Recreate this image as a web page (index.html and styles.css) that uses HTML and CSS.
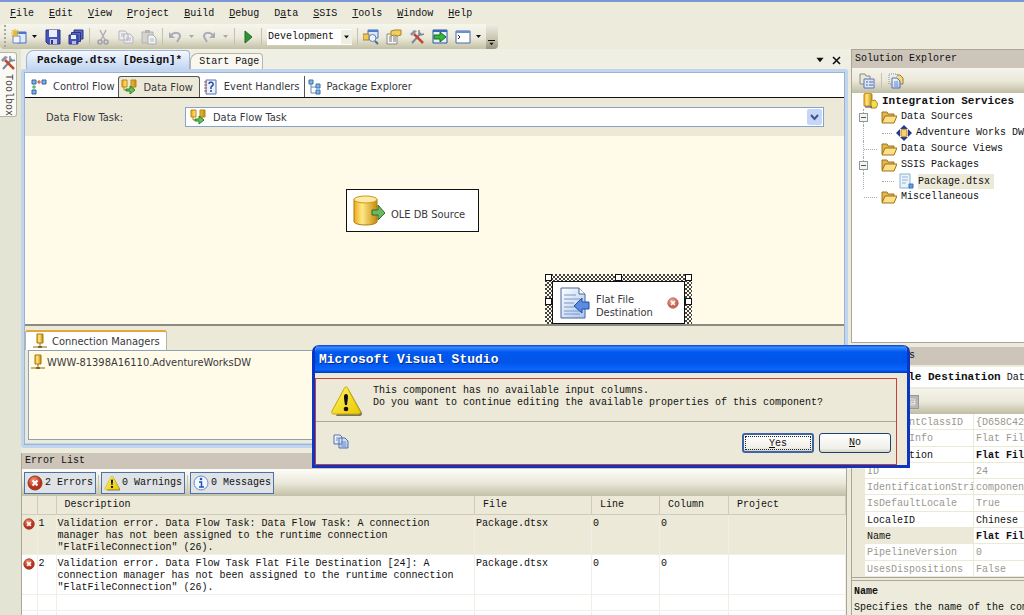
FILE: index.html
```html
<!DOCTYPE html>
<html lang="en">
<head>
<meta charset="utf-8">
<title>Package.dtsx - Microsoft Visual Studio</title>
<link rel="stylesheet" href="styles.css">
</head>
<body>
<svg class="defs" aria-hidden="true">
  <defs>
    <linearGradient id="gold" x1="0" x2="1"><stop offset="0" stop-color="#f0a818"/><stop offset=".35" stop-color="#ffe98a"/><stop offset="1" stop-color="#c88a08"/></linearGradient>
    <linearGradient id="warn" x1="0" x2="1" y2="1"><stop offset="0" stop-color="#fff36a"/><stop offset="1" stop-color="#eac800"/></linearGradient>
    <radialGradient id="red" cx=".4" cy=".3"><stop offset="0" stop-color="#f09a78"/><stop offset="1" stop-color="#b8301c"/></radialGradient>
    <linearGradient id="page" x1="0" x2="1" y1="0" y2="1"><stop offset="0" stop-color="#fff"/><stop offset="1" stop-color="#a9c6ee"/></linearGradient>
  </defs>
  <symbol id="i-new" viewBox="0 0 16 16"><path d="M6 3h9v11H6z" fill="#dfeafa" stroke="#4a6eb4"/><path d="M6 3h9v2H6z" fill="#4a76c8"/><path d="M2 7h7v7H2z" fill="#eef4ff" stroke="#6a86b8"/><path d="M4 0v8M0 4h8M1 1l6 6M7 1L1 7" stroke="#e8b830" stroke-width="1.2"/></symbol>
  <symbol id="i-save" viewBox="0 0 16 16"><path d="M1 1h14v14H3l-2-2z" fill="#4654b4" stroke="#2c3488"/><path d="M4 1h8v7H4z" fill="#e8eefc"/><path d="M5 10h7v5H5z" fill="#c4cce8"/><path d="M6 11h2v4H6z" fill="#2c3488"/></symbol>
  <symbol id="i-saveall" viewBox="0 0 16 16"><path d="M6 1h9v9H6z" fill="#5a68c0" stroke="#2c3488"/><path d="M3.500 3.500h9v9h-9z" fill="#5a68c0" stroke="#2c3488"/><path d="M1 6h9v9H1z" fill="#4654b4" stroke="#2c3488"/><path d="M3 6h5v4H3z" fill="#e8eefc"/><path d="M4 12h4v3H4z" fill="#b4bce4"/></symbol>
  <symbol id="i-cut" viewBox="0 0 16 16"><path d="M5 1l5 10M11 1L6 11" stroke="#b0b0b8" stroke-width="1.500"/><circle cx="5" cy="13" r="2" fill="none" stroke="#a0a0ac" stroke-width="1.500"/><circle cx="11" cy="13" r="2" fill="none" stroke="#a0a0ac" stroke-width="1.500"/></symbol>
  <symbol id="i-copy" viewBox="0 0 16 16"><path d="M1 2h6l3 3v6H1zM6 5h6l3 3v6H6z" fill="#eeeef2" stroke="#b4b4be"/><path d="M3 5h3M3 7h3M8 9h5M8 11h5" stroke="#b4b4be"/></symbol>
  <symbol id="i-paste" viewBox="0 0 16 16"><path d="M1 3h11v11H1z" fill="#d4d4cc" stroke="#b0b0b0"/><path d="M4 1h5v3H4z" fill="#b4b4b8"/><path d="M7 6h5l3 3v6H7z" fill="#f4f4f8" stroke="#aaaab4"/><path d="M9 10h4M9 12h4" stroke="#b4b4be"/></symbol>
  <symbol id="i-undo" viewBox="0 0 16 16"><path d="M3 6c4-4 9-2 9 1 0 2-2 4-3 6" fill="none" stroke="#a8aab8" stroke-width="2"/><path d="M1 3v6h6z" fill="#a8aab8"/></symbol>
  <symbol id="i-redo" viewBox="0 0 16 16"><path d="M11 6C7 2 2 4 2 7c0 2 2 4 3 6" fill="none" stroke="#a8aab8" stroke-width="2"/><path d="M13 3v6H7z" fill="#a8aab8"/></symbol>
  <symbol id="i-play" viewBox="0 0 16 16"><path d="M5 2l7 6-7 6z" fill="#2f9434" stroke="#1d6c22"/></symbol>
  <symbol id="i-find" viewBox="0 0 16 16"><path d="M5 1h10v8H5z" fill="#dce8fa" stroke="#4470b8"/><path d="M5 1h10v2H5z" fill="#4e7ece"/><path d="M0 5h6v6H0z" fill="#f0c858" stroke="#a88420"/><circle cx="9.500" cy="9" r="3.500" fill="#e6f2ff" stroke="#6080a8"/><path d="M12 12l3 3" stroke="#58688c" stroke-width="2"/></symbol>
  <symbol id="i-props" viewBox="0 0 16 16"><path d="M1 5h10v10H1z" fill="#f8f8f4" stroke="#888"/><path d="M3 8h3M3 10h3M3 12h3M7 8h3M7 10h3M7 12h3" stroke="#787878"/><path d="M5 2l4-1h6v5l-4 1-3-1-3 1z" fill="#f2cf62" stroke="#a58220"/></symbol>
  <symbol id="i-tools" viewBox="0 0 16 16"><path d="M3 14L12 4" stroke="#7c8698" stroke-width="2"/><path d="M10 1v4l2 1 3-1" fill="none" stroke="#7c8698" stroke-width="1.500"/><path d="M5 5l9 9" stroke="#c24838" stroke-width="2.500"/><path d="M1 5l4-4 3 1-5 5z" fill="#8a94a4"/></symbol>
  <symbol id="i-start" viewBox="0 0 16 16"><path d="M1 1h14v13H1z" fill="#e6f0fc" stroke="#2c549c"/><path d="M1 1h14v2H1z" fill="#3a68b8"/><path d="M2 6h6V3l6 5-6 5v-3H2z" fill="#36b43c" stroke="#17701e"/></symbol>
  <symbol id="i-cmd" viewBox="0 0 16 16"><path d="M1 2h14v12H1z" fill="#fff" stroke="#4468a8"/><path d="M1 2h14v2H1z" fill="#6a90d0"/><path d="M3 6l2 2-2 2" fill="none" stroke="#223"/></symbol>
  <symbol id="i-down" viewBox="0 0 7 7"><path d="M1 2h5L3.500 5z" fill="currentColor"/></symbol>
  <symbol id="i-control" viewBox="0 0 16 16"><path d="M1 1h4v4H1zM11 1h4v4h-4zM1 11h4v4H1z" fill="#7eb0e4" stroke="#31659c"/><path d="M6 3h4M8 1v4" stroke="#c84030"/><path d="M3 6v4M1 8h4" stroke="#35a048"/></symbol>
  <symbol id="i-data" viewBox="0 0 16 16"><path d="M1 1h5v7H1zM10 1h5v7h-5z" fill="url(#gold)" stroke="#b8860b"/><path d="M3 8v3h3M12 8v3h-3" fill="none" stroke="#a88a30"/><path d="M5 10h4V7l5 4-5 4v-3H5z" fill="#66c455" stroke="#2d8228"/></symbol>
  <symbol id="i-event" viewBox="0 0 16 16"><path d="M4 1h10v14H4z" fill="#e8f0fc" stroke="#5674a8"/><path d="M2 3h3M2 6h3M2 9h3M2 12h3" stroke="#b05848"/><path d="M7 5c0-3 5-2 4 1l-2 2v2M9 11v2" fill="none" stroke="#2648a8" stroke-width="1.500"/></symbol>
  <symbol id="i-tree" viewBox="0 0 16 16"><path d="M4 4v10h5M4 8h5" fill="none" stroke="#6a8ab0"/><path d="M2 1h4v4H2zM9 5h4v4H9zM9 11h4v4H9z" fill="#7eb8e8" stroke="#3a70a8"/></symbol>
  <symbol id="i-conn" viewBox="0 0 16 16"><path d="M5 1h6v9H5z" fill="url(#gold)" stroke="#a8780a"/><path d="M8 10v3M1 14h14" stroke="#8a6a18"/><path d="M6 13h4v2H6z" fill="#8a6a18"/></symbol>
  <symbol id="i-folder" viewBox="0 0 16 16"><path d="M1 3h5l1 2h6v8H1z" fill="#e4b54a" stroke="#9a7420"/><path d="M4 7h12l-3 7H1z" fill="#ffdf83" stroke="#9a7420"/></symbol>
  <symbol id="i-root" viewBox="0 0 16 16"><path d="M2 1c2-1 7-1 8 0v12H2z" fill="url(#gold)" stroke="#c08a10"/><path d="M9 8l4-1 3 4-2 4H9z" fill="#f4dc50" stroke="#a88820"/><path d="M3 14h7" stroke="#2c3c8c"/></symbol>
  <symbol id="i-source" viewBox="0 0 16 16"><path d="M8 0l4 4H4zM8 16l4-4H4zM0 8l4-4v8zM16 8l-4-4v8z" fill="#27378f"/><path d="M5 5c1-1 5-1 6 0v6c-1 1-5 1-6 0z" fill="#f4d070" stroke="#b48828"/></symbol>
  <symbol id="i-pkg" viewBox="0 0 16 16"><path d="M2 1h10v14H2z" fill="#eaf4fc" stroke="#88b0cc"/><path d="M4 4h6M4 7h6M4 10h4" stroke="#8cb4d8"/><path d="M11 11h4v4h-4z" fill="#64a0dc" stroke="#3870b0"/></symbol>
  <symbol id="i-pages" viewBox="0 0 16 16"><path d="M1 2h6l2 2v7H1zM6 5h6l3 3v7H6z" fill="url(#page)" stroke="#5470a8"/><path d="M8 9h5M8 11h5M8 13h5M3 5h3M3 7h2" stroke="#6a8cc4"/></symbol>
  <symbol id="i-showall" viewBox="0 0 16 16"><path d="M1 1h8v10H1z" fill="none" stroke="#8a94a4" stroke-dasharray="1 1"/><path d="M9 2h3l3 3v6h-4" fill="#f2d684" stroke="#9a7c30"/><path d="M4 5h5l3 3v7H4z" fill="url(#page)" stroke="#5470a8"/><path d="M6 9h4M6 11h4M6 13h4" stroke="#6a8cc4"/></symbol>
  <symbol id="i-list" viewBox="0 0 16 16"><path d="M1 3V1h5l1 2h4v8H1z" fill="#e8e8d8" stroke="#8a8a80"/><path d="M5 6h10v9H5z" fill="#dce6f8" stroke="#5a74b0"/><path d="M7 9h2M10 9h4M7 12h2M10 12h4" stroke="#4a68a8"/></symbol>
  <symbol id="i-error" viewBox="0 0 16 16"><circle cx="8" cy="8" r="7" fill="url(#red)" stroke="#98341c"/><path d="M5.500 5.500l5 5M10.500 5.500l-5 5" stroke="#fff" stroke-width="2"/></symbol>
  <symbol id="i-warn" viewBox="0 0 32 32"><path d="M19 5l13 23c0 2-1 3-2 3H6z" fill="#5c5840" opacity=".8"/><path d="M16 2c1 0 2 1 2 2l12 22c1 2 0 3-2 3H4c-2 0-3-1-2-3L14 4c0-1 1-2 2-2z" fill="url(#warn)" stroke="#c8a800"/><path d="M16 9c3 0 2 4 1 11h-2c-1-7-2-11 1-11z" fill="#111"/><circle cx="16" cy="24" r="2.300" fill="#111"/></symbol>
  <symbol id="i-info" viewBox="0 0 16 16"><circle cx="8" cy="8" r="7" fill="#f2f7ff" stroke="#6e8cc4"/><path d="M6 7h2.500v5M6 12h5" stroke="#2450b8" stroke-width="1.500" fill="none"/><circle cx="8" cy="4" r="1.300" fill="#2450b8"/></symbol>
  <symbol id="i-db" viewBox="0 0 32 32"><path d="M1 4v23c2 4 21 4 23 0V4z" fill="url(#gold)" stroke="#b07c08"/><ellipse cx="12.500" cy="4.500" rx="11.500" ry="3.500" fill="#ffe9a4" stroke="#c8981c"/><path d="M19 15h6v-5l7 8-7 7v-5h-6z" fill="#6cb860" stroke="#2f6c2c"/></symbol>
  <symbol id="i-file" viewBox="0 0 32 32"><path d="M3 1h18l6 6v24H3z" fill="url(#page)" stroke="#4a6496"/><path d="M21 1v6h6" fill="#fff" stroke="#4a6496"/><path d="M6 8h12M6 12h16M6 16h10M6 20h10M6 24h16M6 27h16" stroke="#7c96c8"/><path d="M31 15h-7v-4l-8 8 8 7v-4h7z" fill="#5a8ce4" stroke="#264c9c"/></symbol>
</svg>

<nav class="menu" aria-label="Main menu">
  <button><u>F</u>ile</button><button><u>E</u>dit</button><button><u>V</u>iew</button><button><u>P</u>roject</button><button><u>B</u>uild</button><button><u>D</u>ebug</button><button>D<u>a</u>ta</button><button><u>S</u>SIS</button><button><u>T</u>ools</button><button><u>W</u>indow</button><button><u>H</u>elp</button>
</nav>

<div class="toolrow">
  <div class="toolbar" role="toolbar" aria-label="Standard">
    <button aria-label="New project"><svg class="ic"><use href="#i-new"/></svg></button>
    <svg class="drop"><use href="#i-down"/></svg>
    <button aria-label="Save"><svg class="ic"><use href="#i-save"/></svg></button>
    <button aria-label="Save all"><svg class="ic"><use href="#i-saveall"/></svg></button>
    <i class="sep"></i>
    <button aria-label="Cut"><svg class="ic"><use href="#i-cut"/></svg></button>
    <button aria-label="Copy"><svg class="ic"><use href="#i-copy"/></svg></button>
    <button aria-label="Paste"><svg class="ic"><use href="#i-paste"/></svg></button>
    <i class="sep"></i>
    <button aria-label="Undo"><svg class="ic"><use href="#i-undo"/></svg></button>
    <svg class="drop dim"><use href="#i-down"/></svg>
    <button aria-label="Redo"><svg class="ic"><use href="#i-redo"/></svg></button>
    <svg class="drop dim"><use href="#i-down"/></svg>
    <i class="sep"></i>
    <button aria-label="Start debugging"><svg class="ic"><use href="#i-play"/></svg></button>
    <i class="sep"></i>
    <span class="config"><select aria-label="Configuration"><option>Development</option></select><svg class="arrow"><use href="#i-down"/></svg></span>
    <i class="sep"></i>
    <button aria-label="Solution Explorer"><svg class="ic"><use href="#i-find"/></svg></button>
    <button aria-label="Properties"><svg class="ic"><use href="#i-props"/></svg></button>
    <button aria-label="Toolbox"><svg class="ic"><use href="#i-tools"/></svg></button>
    <button aria-label="Start page"><svg class="ic"><use href="#i-start"/></svg></button>
    <button aria-label="Command window"><svg class="ic"><use href="#i-cmd"/></svg></button>
    <svg class="drop"><use href="#i-down"/></svg>
  </div>
  <button class="overflow" aria-label="Toolbar options"><svg class="arrow"><use href="#i-down"/></svg></button>
</div>

<div class="shell">
  <aside class="rail"><button class="toolbox"><svg class="ic"><use href="#i-tools"/></svg><span>Toolbox</span></button></aside>

  <main class="center">
    <div class="doctabs">
      <button class="doctab active">Package.dtsx [Design]*</button>
      <button class="doctab">Start Page</button>
      <span class="grow"></span>
      <button class="winbtn" aria-label="Window list"><svg class="arrow big"><use href="#i-down"/></svg></button>
      <button class="winbtn" aria-label="Close"><svg class="close" viewBox="0 0 9 9"><path d="M1 1l7 7M8 1L1 8" stroke="#111" stroke-width="1.600"/></svg></button>
    </div>
    <section class="doc">
      <div class="views">
        <button class="view"><svg class="ic"><use href="#i-control"/></svg>Control Flow</button>
        <button class="view on"><svg class="ic"><use href="#i-data"/></svg>Data Flow</button>
        <button class="view ruled"><svg class="ic"><use href="#i-event"/></svg>Event Handlers</button>
        <button class="view"><svg class="ic"><use href="#i-tree"/></svg>Package Explorer</button>
      </div>
      <div class="task">
        <label for="task">Data Flow Task:</label>
        <div class="combo"><svg class="ic"><use href="#i-data"/></svg><select id="task"><option>Data Flow Task</option></select><span class="combobtn"><svg viewBox="0 0 9 7"><path d="M1 1l3.500 4L8 1" fill="none" stroke="#3c5688" stroke-width="2"/></svg></span></div>
      </div>
      <div class="canvas">
        <div class="node source"><svg class="big-ic"><use href="#i-db"/></svg><span>OLE DB Source</span></div>
        <div class="selection">
          <div class="node dest"><svg class="big-ic"><use href="#i-file"/></svg><span>Flat File<br>Destination</span><svg class="err"><use href="#i-error"/></svg></div>
          <i class="h tl"></i><i class="h tc"></i><i class="h tr"></i><i class="h ml"></i><i class="h mr"></i>
        </div>
      </div>
      <div class="conn">
        <button class="conntab"><svg class="ic"><use href="#i-conn"/></svg>Connection Managers</button>
        <div class="connlist"><div class="connitem"><svg class="ic"><use href="#i-conn"/></svg>WWW-81398A16110.AdventureWorksDW</div></div>
      </div>
    </section>

    <section class="errors">
      <h2 class="title">Error List</h2>
      <div class="errbar">
        <button><svg class="ic"><use href="#i-error"/></svg>2 Errors</button><i></i>
        <button><svg class="ic"><use href="#i-warn"/></svg>0 Warnings</button><i></i>
        <button><svg class="ic"><use href="#i-info"/></svg>0 Messages</button>
      </div>
      <div class="tablewrap">
      <table>
        <colgroup><col class="c1"><col class="c2"><col><col class="c4"><col class="c5"><col class="c6"><col class="c7"></colgroup>
        <thead><tr><th></th><th></th><th>Description</th><th>File</th><th>Line</th><th>Column</th><th>Project</th></tr></thead>
        <tbody>
          <tr class="sel"><td><svg class="sm"><use href="#i-error"/></svg></td><td>1</td><td>Validation error. Data Flow Task: Data Flow Task: A connection<br>manager has not been assigned to the runtime connection<br>"FlatFileConnection" (26).</td><td>Package.dtsx</td><td>0</td><td>0</td><td></td></tr>
          <tr><td><svg class="sm"><use href="#i-error"/></svg></td><td>2</td><td>Validation error. Data Flow Task Flat File Destination [24]: A<br>connection manager has not been assigned to the runtime connection<br>"FlatFileConnection" (26).</td><td>Package.dtsx</td><td>0</td><td>0</td><td></td></tr>
          <tr class="blank"><td></td><td></td><td></td><td></td><td></td><td></td><td></td></tr>
          <tr class="blank"><td></td><td></td><td></td><td></td><td></td><td></td><td></td></tr>
        </tbody>
      </table>
      </div>
    </section>
  </main>

  <aside class="side">
    <section class="explorer">
      <h2 class="title">Solution Explorer</h2>
      <div class="panelbar"><button aria-label="Properties"><svg class="ic"><use href="#i-list"/></svg></button><i class="rule"></i><button aria-label="Show all files"><svg class="ic"><use href="#i-showall"/></svg></button></div>
      <ul class="tree">
        <li class="root"><svg class="ic"><use href="#i-root"/></svg>Integration Services</li>
        <li class="l1"><b class="exp"></b><svg class="ic"><use href="#i-folder"/></svg>Data Sources</li>
        <li class="l2"><i class="twig"></i><svg class="ic"><use href="#i-source"/></svg>Adventure Works DW</li>
        <li class="l1"><i class="twig"></i><svg class="ic"><use href="#i-folder"/></svg>Data Source Views</li>
        <li class="l1"><b class="exp"></b><svg class="ic"><use href="#i-folder"/></svg>SSIS Packages</li>
        <li class="l2"><i class="twig"></i><svg class="ic"><use href="#i-pkg"/></svg><span class="picked">Package.dtsx</span></li>
        <li class="l1"><i class="twig"></i><svg class="ic"><use href="#i-folder"/></svg>Miscellaneous</li>
      </ul>
    </section>
    <section class="props">
      <h2 class="title">Properties</h2>
      <div class="object"><b>Flat File Destination</b> Dat</div>
      <div class="panelbar"><button aria-label="Categorized"><svg class="ic"><use href="#i-list"/></svg></button><button aria-label="Alphabetical"><svg class="ic"><use href="#i-pages"/></svg></button><button class="pages" aria-label="Property pages"><svg viewBox="0 0 16 16"><path d="M1 4h12v8H1zM1 7h5M8 7h5v3H8z" fill="none" stroke="#eee"/></svg></button></div>
      <dl class="grid">
        <div><dt>ComponentClassID</dt><dd>{D658C42</dd></div>
        <div><dt>ContactInfo</dt><dd>Flat Fil</dd></div>
        <div class="ed"><dt>Description</dt><dd class="semi">Flat Fil</dd></div>
        <div><dt>ID</dt><dd>24</dd></div>
        <div><dt>IdentificationStri</dt><dd>componen</dd></div>
        <div><dt>IsDefaultLocale</dt><dd>True</dd></div>
        <div class="ed"><dt>LocaleID</dt><dd>Chinese</dd></div>
        <div class="ed cur"><dt>Name</dt><dd class="semi">Flat Fil</dd></div>
        <div><dt>PipelineVersion</dt><dd>0</dd></div>
        <div><dt>UsesDispositions</dt><dd>False</dd></div>
      </dl>
      <div class="help"><b>Name</b><span>Specifies the name of the com</span></div>
    </section>
  </aside>
</div>

<div class="dialog" role="alertdialog" aria-labelledby="dt" aria-describedby="dm">
  <h1 id="dt">Microsoft Visual Studio</h1>
  <div class="body">
    <div class="frame">
      <div class="msg"><svg><use href="#i-warn"/></svg><p id="dm">This component has no available input columns.<br>Do you want to continue editing the available properties of this component?</p></div>
      <div class="acts"><button class="copy" aria-label="Copy message"><svg class="ic"><use href="#i-pages"/></svg></button><span class="grow"></span><button class="push default"><span><u>Y</u>es</span></button><button class="push"><u>N</u>o</button></div>
    </div>
  </div>
</div>
</body>
</html>
```
FILE: styles.css
```css
* { box-sizing: border-box; }
body {
  margin: 0; height: 100vh; overflow: hidden; display: flex; flex-direction: column;
  background: #ecebdc; border-top: 2px solid #7b97d4; color: #111;
  font: 10px/12px "Liberation Mono", monospace;
}
button, select { font: inherit; color: inherit; border: 0; padding: 0; margin: 0; background: none; border-radius: 0; text-align: left; white-space: nowrap; }
select { appearance: none; outline: 0; }
.defs { position: absolute; width: 0; height: 0; }
.ic { width: 16px; height: 16px; flex: none; display: block; }
.grow { flex: 1; }
h1, h2, p, dl, dd, ul { margin: 0; padding: 0; }

.menu { display: flex; gap: 15px; padding: 6px 10px 4px; height: 22px; flex: none; }
.toolrow { display: flex; height: 25px; flex: none; }
.toolbar { display: flex; align-items: center; gap: 7px; padding: 0 4px 0 11px; border-radius: 4px 0 0 4px; background: radial-gradient(circle at 1px 1px, #aaa793 1px, transparent 1px) 4px 5px / 3px 4px repeat-y, linear-gradient(#f7f6ee, #ebe9da 55%, #c3c0a6); }
.toolbar button { flex: none; }
.drop { width: 7px; height: 7px; margin-left: -3px; flex: none; }
.dim { color: #a8a8a8; }
.arrow { width: 7px; height: 7px; display: block; }
.arrow.big { width: 10px; height: 10px; }
.sep { width: 1px; height: 17px; margin: 0 -2px; background: #c5c2b0; }
.config { display: flex; align-items: center; width: 85px; height: 16px; background: #fff; }
.config select { flex: 1; padding-left: 1px; min-width: 0; }
.config .arrow { background: #efeee4; width: 11px; height: 14px; padding: 0 2px; }
.overflow { width: 12px; padding: 13px 2px 0; border-radius: 0 4px 4px 0; background: linear-gradient(#efeee6, #c8c5b0 60%, #98957e); }
.overflow .arrow { border-top: 1px solid #111; }

.shell { flex: 1; min-height: 0; display: flex; }
.rail { width: 21px; flex: none; background: #e4e4d5; padding-top: 3px; }
.toolbox { display: flex; flex-direction: column; align-items: center; gap: 3px; width: 17px; height: 65px; padding-top: 2px; background: #faf9f3; border: 1px solid #b8b5a4; border-left: 0; border-radius: 0 3px 3px 0; color: #444; }
.toolbox span { writing-mode: vertical-rl; line-height: 12px; }
.center { flex: 1; min-width: 0; display: flex; flex-direction: column; }
.doctabs { display: flex; align-items: flex-end; height: 20px; flex: none; padding: 0 7px 0 5px; background: #f0efe4; }
.doctab { height: 16px; padding: 0 3px 0 8px; border: 1px solid #b9b6a6; border-bottom: 0; border-radius: 8px 4px 0 0; background: #f8f7f0; }
.doctab.active { height: 19px; padding: 0 7px 0 10px; font-weight: bold; font-size: 11px; border-color: #9db5d8; background: linear-gradient(#f4f8fe, #c3d6f1); }
.winbtn { width: 16px; height: 18px; display: grid; place-items: center; }
.close { width: 9px; height: 9px; }

.doc { display: flex; flex-direction: column; height: 379px; flex: none; padding: 1px; border: 3px solid #c2d5ef; border-bottom-width: 5px; outline: 1px solid #9bb3d3; outline-offset: -4px; border-radius: 3px; font: 11px/13px "DejaVu Sans Condensed", "Noto Sans", sans-serif; color: #38383c; margin-right: 3px; background: #ece9d8; }
.views { display: flex; align-items: flex-end; height: 25px; flex: none; background: #fff; border-bottom: 1px solid #111; padding-left: 5px; }
.view { display: flex; align-items: center; gap: 6px; height: 21px; padding: 0 5px 0 2px; }
.view.on { background: #ece9d8; border: 1px solid #555; border-bottom: 0; border-radius: 3px 3px 0 0; padding: 0 6px 0 2px; }
.view.ruled { border-right: 1px solid #555; }
.view:first-child { padding: 0 4px 0 1px; }
.view:last-child { gap: 3px; }
.task { display: flex; align-items: center; height: 38px; flex: none; padding: 0 20px 0 21px; }
.task label { width: 139px; flex: none; }
.combo { flex: 1; display: flex; align-items: center; gap: 7px; height: 20px; padding: 1px 1px 1px 4px; background: #fff; border: 1px solid #86a3c8; }
.combo select { flex: 1; min-width: 0; height: 16px; }
.combobtn { width: 15px; height: 16px; display: grid; place-items: center; background: #c6d5f8; border-radius: 2px; }
.combobtn svg { width: 9px; height: 7px; }
.canvas { position: relative; flex: 1; overflow: hidden; background: #fffbe8; border-bottom: 2px solid #8b8b84; }
.node { display: flex; align-items: center; width: 133px; height: 43px; background: #fff; border: 1px solid #111; }
.big-ic { width: 32px; height: 32px; flex: none; }
.node.source { position: absolute; left: 321px; top: 53px; gap: 6px; padding-left: 6px; }
.node.source span { padding-top: 7px; }
.selection { position: absolute; left: 520px; top: 138px; width: 147px; height: 57px; padding: 7px; background: repeating-conic-gradient(#444 0 25%, #fffbe8 0 50%) 0 0 / 4px 4px; }
.dest { gap: 6px; padding: 0 5px; }
.dest span { flex: 1; padding-top: 7px; }
.err { width: 12px; height: 12px; opacity: .75; }
.h { position: absolute; width: 7px; height: 7px; border: 1px solid #111; background: #fff; }
.tl { left: 0; top: 0; } .tc { left: 70px; top: 0; } .tr { right: 0; top: 0; } .ml { left: 0; top: 24px; } .mr { right: 0; top: 24px; }
.conn { display: flex; flex-direction: column; align-items: flex-start; height: 116px; flex: none; padding: 4px 0 2px; }
.conntab { display: flex; align-items: center; gap: 4px; height: 20px; padding: 0 6px; background: #fff; border: 1px solid #b4b4a6; border-top: 2px solid #e6a63c; border-bottom: 0; border-radius: 3px 3px 0 0; }
.connlist { flex: 1; align-self: stretch; margin-left: 3px; padding: 3px 1px; border: 1px solid #8ea3b0; background: #fffbe8; }
.connitem { display: flex; align-items: center; gap: 1px; }

.title { height: 16px; flex: none; padding: 1px 3px; font: 10px/14px "Liberation Mono", monospace; background: #cdc5ba; }
.errors { flex: 1; min-height: 0; display: flex; flex-direction: column; margin: 5px 4px 0 0; border-left: 1px solid #aaa797; border-right: 1px solid #aaa797; }
.errbar { display: flex; align-items: center; gap: 3px; height: 27px; flex: none; padding: 0 2px; background: linear-gradient(#fdfdfa, #ebe9da 50%, #c3c0a8); }
.errbar button { display: flex; align-items: center; gap: 2px; height: 22px; padding: 0 2px; border: 1px solid #4d73a6; background: #dfe3e6; }
.errbar i { width: 1px; height: 15px; margin: 0 -1px; background: #c5c2b0; }
.tablewrap { flex: 1; min-height: 0; overflow: hidden; background: #fff; }
table { width: 100%; border-collapse: collapse; table-layout: fixed; }
.c1 { width: 15px; } .c2 { width: 19px; } .c4 { width: 117px; } .c5 { width: 68px; } .c6 { width: 69px; } .c7 { width: 117px; }
th { height: 18px; padding: 0 8px; background: #ece9d8; font-weight: normal; text-align: left; border-right: 1px solid #cfccbb; border-bottom: 1px solid #cfccbb; }
td { height: 40px; padding: 3px 1px 0; vertical-align: top; white-space: nowrap; border: 1px solid #f0eee6; border-left: 0; border-top: 0; }
th:first-child, td:first-child { padding-left: 1px; padding-right: 0; }
.sel td { background: #ece9d8; }
.blank td { height: 16px; }
.sm { width: 12px; height: 12px; display: block; }

.side { width: 173px; flex: none; display: flex; flex-direction: column; gap: 4px; }
.side .title { height: 18px; line-height: 16px; }
.explorer { height: 294px; flex: none; display: flex; flex-direction: column; border: 1px solid #aaa797; border-right: 0; background: #fff; }
.panelbar { display: flex; align-items: center; gap: 6px; height: 25px; flex: none; padding: 0 7px; background: linear-gradient(#f5f4ec, #ebe9da 50%, #c0bda4); }
.rule { width: 1px; height: 15px; background: #c5c2b0; }
.tree { list-style: none; white-space: nowrap; overflow: hidden; }
.tree li { display: flex; align-items: center; gap: 4px; height: 16px; }
.tree .root { font-weight: bold; font-size: 11px; padding-left: 10px; }
.l1, .l2 { margin-left: 11px; border-left: 1px dotted #aaa; }
.l1:last-child { border-color: transparent; }
.exp { width: 9px; height: 9px; margin-left: -5px; margin-right: 9px; border: 1px solid #8a98a8; background: linear-gradient(#555, #555) center / 5px 1px no-repeat #f4f4ee; }
.twig { width: 13px; border-top: 1px dotted #aaa; }
.l2 .twig { width: 12px; margin-left: 18px; }
.picked { background: #ece9d8; height: 15px; line-height: 15px; padding-right: 4px; }
.props { flex: 1; min-height: 0; display: flex; flex-direction: column; border-left: 1px solid #aaa797; white-space: nowrap; overflow: hidden; }
.object { height: 20px; flex: none; margin: 2px 0; padding: 4px 0 0 10px; background: #fff; }
.object b { font-size: 11px; }
.pages { width: 16px; height: 14px; background: #b9b7b0; border: 1px solid #999; }
.props .pages svg { width: 14px; height: 12px; display: block; }
.grid { flex: 1; min-height: 0; display: flex; flex-direction: column; padding-left: 13px; background: #ece9d8; border-bottom: 1px solid #aaa797; }
.grid div { flex: 1; min-height: 0; display: grid; grid-template-columns: 108px 1fr; background: #fff; border-bottom: 1px solid #ece9d8; color: #9a988e; }
.grid dt { padding: 3px 0 0 3px; margin-right: -3px; }
.grid dt:only-of-type { padding-left: 2px; }
.grid dd { padding: 3px 0 0 2px; border-left: 1px solid #ece9d8; }
.grid .ed { color: #111; }
.grid .cur dt { background: #ece9d8; margin-right: 0; }
.semi { font-weight: bold; }
.help { display: flex; flex-direction: column; gap: 4px; height: 35px; flex: none; margin-top: 2px; padding: 5px 0 0 2px; border-top: 1px solid #aaa797; }

.dialog { position: absolute; left: 312px; top: 345px; width: 598px; border: 3px solid #0c35c4; border-top: 0; border-radius: 7px 7px 0 0; background: #ece9d8; overflow: hidden; }
.dialog h1 { height: 28px; margin: 0 -3px; padding: 8px 7px; font: bold 13px/14px "Liberation Mono", monospace; color: #fff; text-shadow: 1px 1px #0a2a80; background: linear-gradient(#0a3cc8, #3a8cff 8%, #0058ee 25%, #0055e8 60%, #0a66ff 88%, #0038b8); }
.body { padding: 5px 10px 0 0; }
.frame { border: 1px solid #c8403c; }
.msg { display: flex; gap: 11px; height: 43px; padding: 6px 0 0 14px; border-bottom: 1px solid #aca899; }
.msg svg { width: 32px; height: 32px; flex: none; }
.msg p { white-space: nowrap; }
.acts { display: flex; align-items: flex-start; gap: 5px; height: 42px; padding: 11px 5px 0 17px; }
.push { width: 72px; height: 20px; text-align: center; border: 1px solid #1d4272; border-radius: 3px; background: linear-gradient(#fff, #f0efe8 80%, #d8d4c8); }
.default { border-width: 2px; border-color: #3d64a4; padding: 1px; }
.default span { display: block; height: 14px; line-height: 13px; border: 1px dotted #222; }
```
